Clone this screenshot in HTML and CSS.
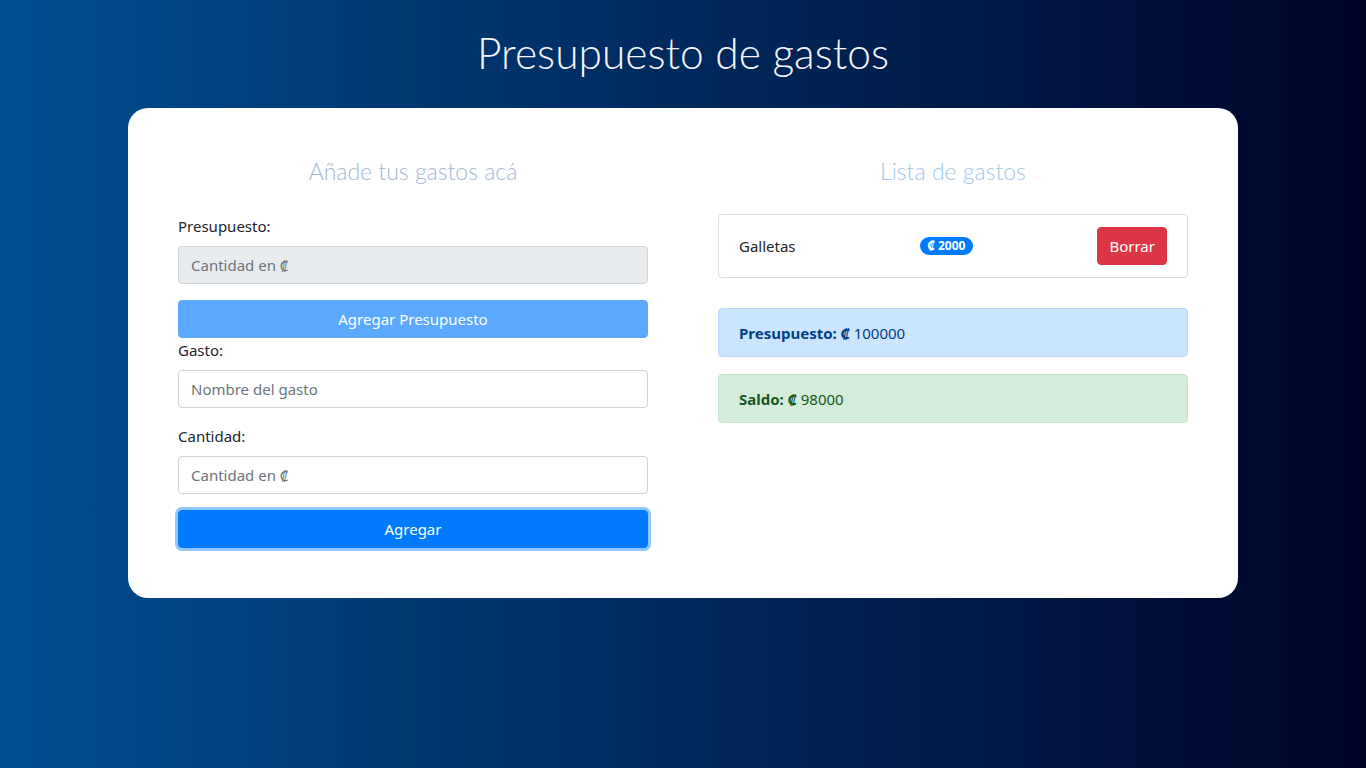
FILE: index.html
```html
<!DOCTYPE html>
<html lang="es">
<head>
<meta charset="utf-8">
<title>Presupuesto de gastos</title>
<link rel="stylesheet" href="styles.css">
</head>
<body>
<header class="header">
  <h1 class="title">Presupuesto de gastos</h1>
</header>
<main class="card">
  <section class="col">
    <h2 class="col-title">Añade tus gastos acá</h2>
    <form class="form">
      <div class="group">
        <label class="label">Presupuesto:</label>
        <input class="input input-disabled" type="text" placeholder="Cantidad en ₡" disabled>
      </div>
      <button type="button" class="btn btn-primary btn-disabled">Agregar Presupuesto</button>
      <div class="group">
        <label class="label">Gasto:</label>
        <input class="input" type="text" placeholder="Nombre del gasto">
      </div>
      <div class="group">
        <label class="label">Cantidad:</label>
        <input class="input" type="text" placeholder="Cantidad en ₡">
      </div>
      <button type="button" class="btn btn-primary btn-focus">Agregar</button>
    </form>
  </section>
  <section class="col">
    <h2 class="col-title col-title-right">Lista de gastos</h2>
    <ul class="list">
      <li class="list-item">
        <span class="item-name">Galletas</span>
        <span class="badge">₡ 2000</span>
        <button type="button" class="btn btn-danger">Borrar</button>
      </li>
    </ul>
    <div class="alert alert-primary"><strong>Presupuesto: ₡</strong> 100000</div>
    <div class="alert alert-success"><strong>Saldo: ₡</strong> 98000</div>
  </section>
</main>
</body>
</html>
```
FILE: styles.css
```css
* { box-sizing: border-box; }
html, body { margin: 0; padding: 0; }
body {
  min-height: 768px;
  background: linear-gradient(to right, #004e92, #000428);
  font-family: "Noto Sans", "Open Sans", sans-serif;
  font-size: 15px;
  line-height: 24px;
  color: #212529;
}
.header { padding-top: 26px; text-align: center; }
.title {
  margin: 0 0 28px;
  font-family: "Lato", sans-serif;
  font-weight: 300;
  font-size: 42.5px;
  line-height: 54px;
  color: #f4f6fa;
}
.card {
  width: 1110px;
  margin: 0 auto;
  background: #fff;
  border-radius: 20px;
  padding: 50px;
  display: flex;
  gap: 70px;
}
.col { width: 470px; }
.col-title {
  margin: 0 0 29px;
  font-family: "Lato", sans-serif;
  font-weight: 300;
  font-size: 23px;
  line-height: 27px;
  text-align: center;
  color: #a3b7d6;
}
.col-title-right { color: #a2c7e8; }
.form { display: flex; flex-direction: column; }
.group { margin-bottom: 16px; }
.label { display: block; margin-bottom: 8px; }
.input {
  display: block;
  width: 100%;
  height: 38px;
  padding: 6px 12px;
  font: inherit;
  color: #495057;
  background: #fff;
  border: 1px solid #ced4da;
  border-radius: 4px;
}
.input::placeholder { color: #6c757d; }
.input-disabled { background: #e9ecef; }
.btn {
  display: inline-block;
  height: 38px;
  padding: 6px 12px;
  font: inherit;
  border: 1px solid transparent;
  border-radius: 4px;
  text-align: center;
}
.btn-primary { width: 100%; color: #fff; background: #007bff; border-color: #007bff; }
.btn-disabled { background: #5aa8ff; border-color: #5aa8ff; }
.btn-focus { box-shadow: 0 0 0 3px rgba(38, 143, 255, .5); }
.btn-danger { color: #fff; background: #dc3545; border-color: #dc3545; padding: 6px 11px; }
.list { list-style: none; margin: 0 0 30px; padding: 0; }
.list-item {
  display: flex;
  align-items: center;
  justify-content: space-between;
  height: 64px;
  padding: 0 20px;
  border: 1px solid #dcdcdc;
  border-radius: 4px;
}
.badge {
  display: inline-block;
  padding: 0 8px;
  font-size: 12px;
  font-weight: 700;
  line-height: 18px;
  color: #fff;
  background: #007bff;
  border-radius: 10px;
}
.alert {
  height: 49px;
  padding: 12px 20px;
  border: 1px solid transparent;
  border-radius: 4px;
  margin-bottom: 17px;
}
.alert-primary { color: #004085; background: #cce5ff; border-color: #b8daff; }
.alert-success { color: #155724; background: #d4edda; border-color: #c3e6cb; }
```
